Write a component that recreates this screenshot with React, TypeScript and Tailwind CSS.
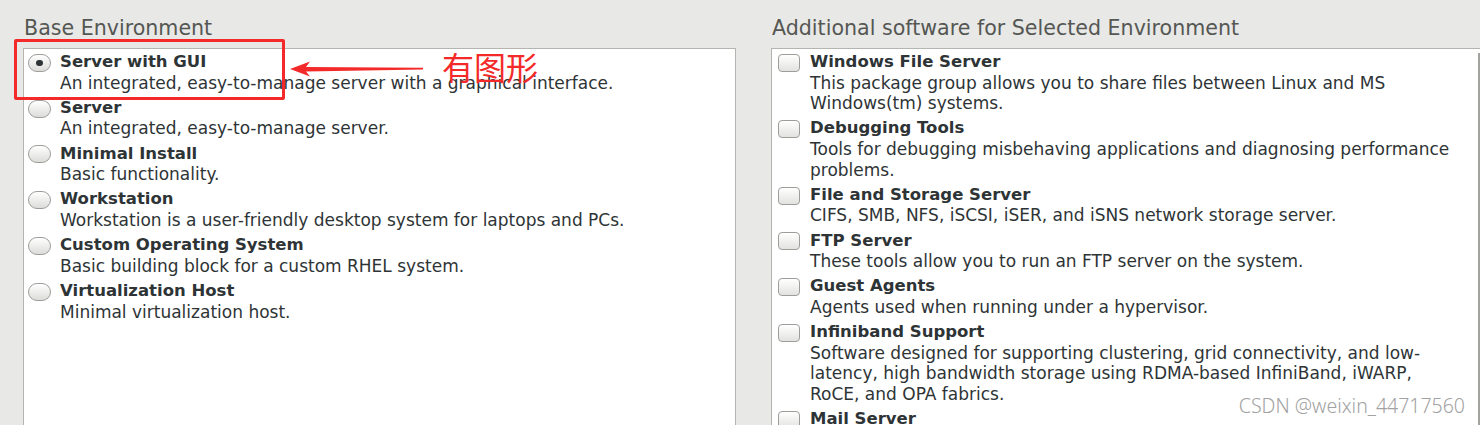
import React from "react";

const baseEnvs = [
  { name: "Server with GUI", desc: "An integrated, easy-to-manage server with a graphical interface.", selected: true },
  { name: "Server", desc: "An integrated, easy-to-manage server." },
  { name: "Minimal Install", desc: "Basic functionality." },
  { name: "Workstation", desc: "Workstation is a user-friendly desktop system for laptops and PCs." },
  { name: "Custom Operating System", desc: "Basic building block for a custom RHEL system." },
  { name: "Virtualization Host", desc: "Minimal virtualization host." },
];

const addons = [
  { name: "Windows File Server", desc: "This package group allows you to share files between Linux and MS Windows(tm) systems." },
  { name: "Debugging Tools", desc: "Tools for debugging misbehaving applications and diagnosing performance problems." },
  { name: "File and Storage Server", desc: "CIFS, SMB, NFS, iSCSI, iSER, and iSNS network storage server." },
  { name: "FTP Server", desc: "These tools allow you to run an FTP server on the system." },
  { name: "Guest Agents", desc: "Agents used when running under a hypervisor." },
  { name: "Infiniband Support", desc: "Software designed for supporting clustering, grid connectivity, and low-latency, high bandwidth storage using RDMA-based InfiniBand, iWARP, RoCE, and OPA fabrics." },
  { name: "Mail Server", desc: "These packages allow you to configure an IMAP or SMTP mail server." },
];

const Radio = ({ checked }: { checked?: boolean }) => (
  <span className="mt-[1px] flex h-[18px] w-[23px] shrink-0 items-center justify-center rounded-full border border-[#9d9d9a] bg-gradient-to-b from-[#ffffff] to-[#dcdcda]">
    {checked && <span className="h-[6px] w-[7px] rounded-full bg-[#2e3436]" />}
  </span>
);

const Checkbox = () => (
  <span className="mt-[1px] h-[18px] w-[22px] shrink-0 rounded-[4px] border border-[#9d9d9a] bg-gradient-to-b from-[#ffffff] to-[#e2e2e0]" />
);

export default function App() {
  return (
    <div
      className="relative flex h-[425px] w-[1480px] overflow-hidden bg-[#e8e8e7] pl-[23px] text-[#2e3436]"
      style={{ fontFamily: '"DejaVu Sans", "Noto Sans", sans-serif' }}
    >
      {/* Base Environment */}
      <section className="flex w-[713px] shrink-0 flex-col">
        <h2 className="pl-[1px] pt-[16px] pb-[8px] text-[20.6px] leading-[24px] text-[#555753]">Base Environment</h2>
        <div className="flex-1 border-l border-r border-t border-[#b4b4b1] bg-white pl-[4px] pt-[3px]">
          {baseEnvs.map((env) => (
            <div key={env.name} className="flex gap-[9px] pb-[4.6px]">
              <div className="flex h-[20.6px] items-center">
                <Radio checked={env.selected} />
              </div>
              <div className="text-[17px] leading-[20.6px]">
                <div className="text-[16.5px] font-bold">{env.name}</div>
                <div>{env.desc}</div>
              </div>
            </div>
          ))}
        </div>
      </section>

      {/* Additional software */}
      <section className="ml-[35px] flex flex-1 flex-col">
        <h2 className="pl-[1px] pt-[16px] pb-[8px] text-[20.6px] leading-[24px] text-[#555753]">
          Additional software for Selected Environment
        </h2>
        <div className="flex flex-1 border-l border-t border-[#b4b4b1] bg-white">
          <div className="flex-1 pl-[6px] pt-[3px]">
            {addons.map((a) => (
              <div key={a.name} className="flex gap-[10px] pb-[4.6px]">
                <div className="flex h-[20.6px] items-center">
                  <Checkbox />
                </div>
                <div className="w-[655px] text-[17px] leading-[20.6px]">
                  <div className="text-[16.5px] font-bold">{a.name}</div>
                  <div>{a.desc}</div>
                </div>
              </div>
            ))}
          </div>
          <div className="mt-[4px] w-[2px] bg-[#a3a3a0]" />
        </div>
      </section>

      {/* annotation overlay */}
      <div className="absolute left-[14px] top-[39px] h-[61px] w-[271px] rounded-[2px] border-[3px] border-[#f42a2a]" />
      <svg className="absolute left-[288px] top-[60px]" width="140" height="18" viewBox="0 0 140 18">
        <polygon points="2,9 22,1.5 18,7 135,7.8 135,9.6 18,11.4 22,16.5" fill="#f42a2a" />
      </svg>
      <div
        className="absolute left-[442px] top-[50px] text-[32px] leading-[32px] text-[#f42a2a]"
        style={{ fontFamily: '"Noto Sans CJK SC", sans-serif' }}
      >
        有图形
      </div>
      <div
        className="absolute bottom-[8px] right-[15px] text-[19.5px] leading-[22px] text-[#a2a2a2]"
        style={{ fontFamily: '"Noto Sans", sans-serif', fontWeight: 300, textShadow: "0 0 2px #fff" }}
      >
        CSDN @weixin_44717560
      </div>
    </div>
  );
}
